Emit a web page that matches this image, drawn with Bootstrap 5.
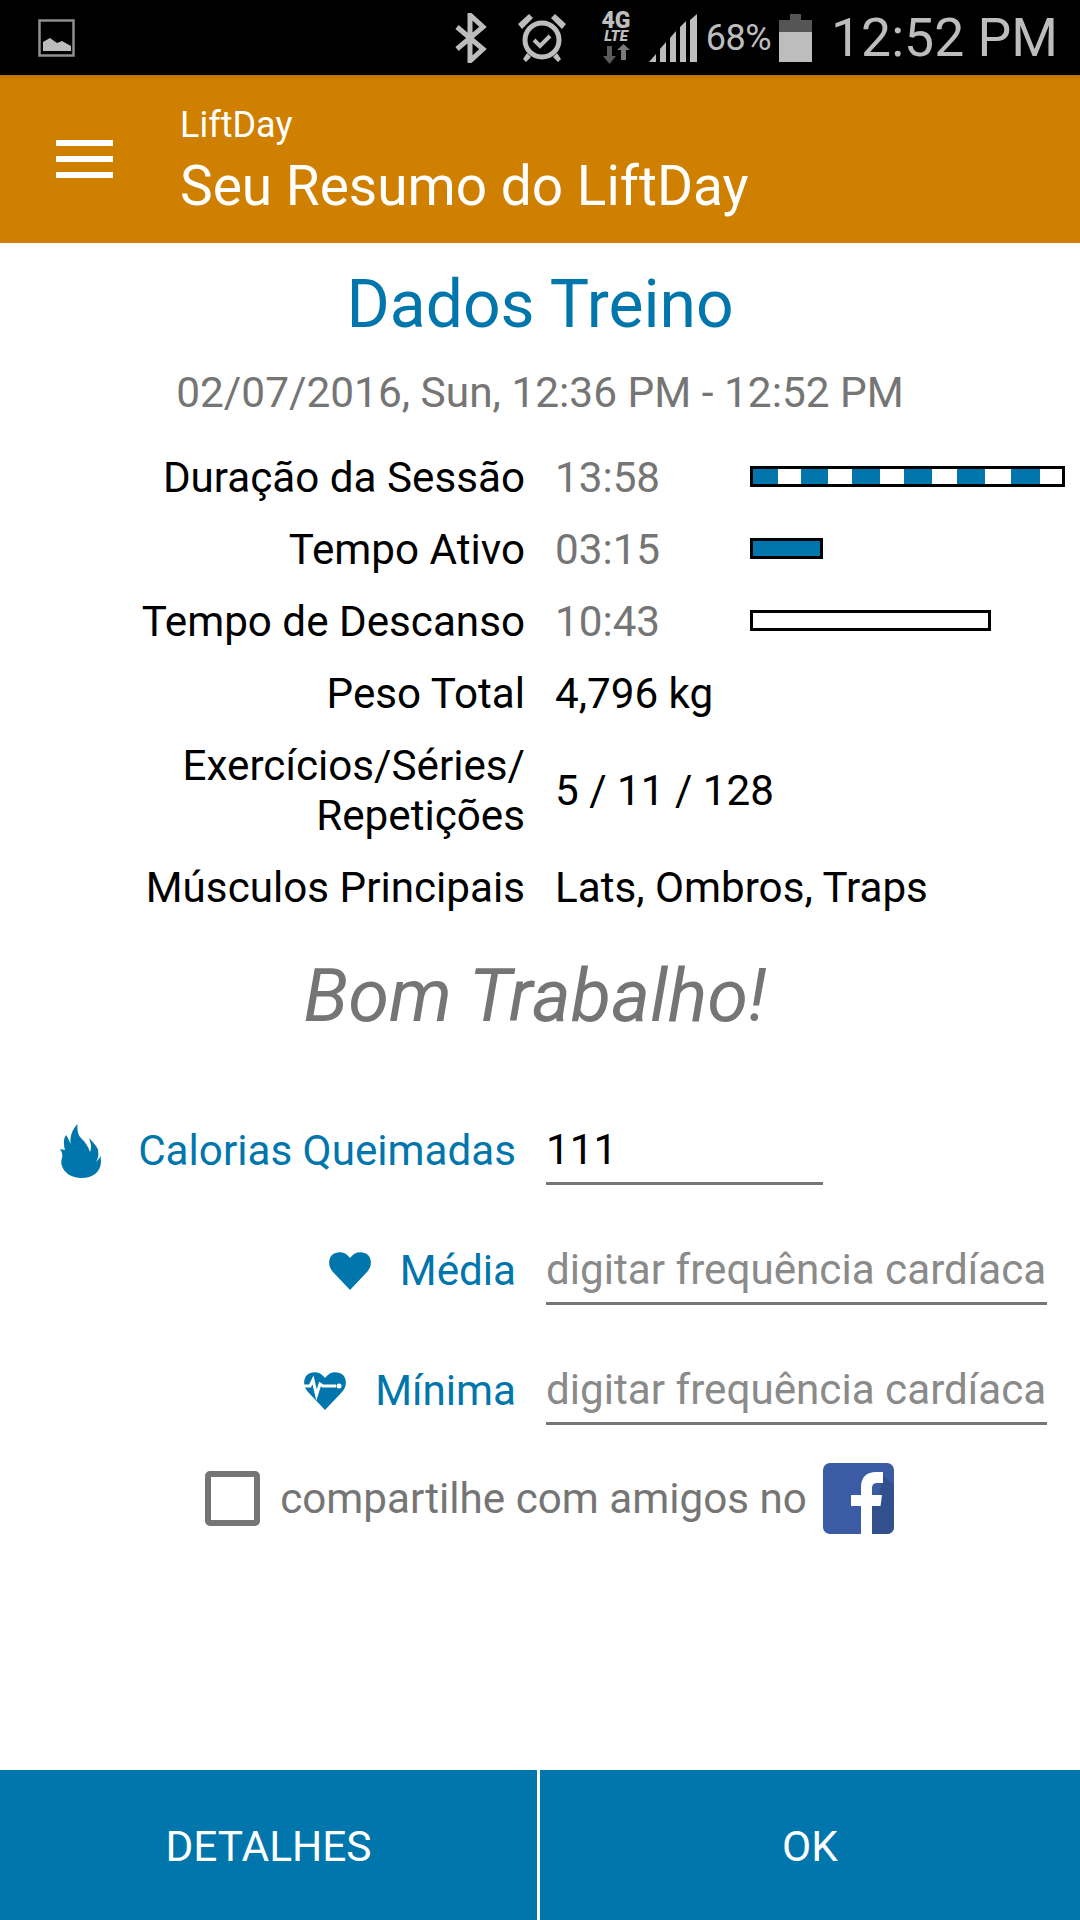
<!DOCTYPE html>
<html lang="pt">
<head>
    <meta charset="UTF-8">
    <title>LiftDay | Seu Resumo</title>
    <meta name="viewport" content="width=device-width, initial-scale=1" />
    <link href="https://cdn.jsdelivr.net/npm/bootstrap@5.3.0/dist/css/bootstrap.min.css" rel="stylesheet">
    <style>
        body {
            background-color: #fff;
            font-family: Roboto, "Liberation Sans", sans-serif;
            margin: 0;
        }
        .screen {
            width: 1080px;
            height: 1920px;
            overflow: hidden;
        }
        .status-bar {
            height: 75px;
            background-color: #000;
            color: #bdbdbd;
            padding: 0 22px 0 38px;
        }
        .status-gap-alarm { margin-left: 31px; }
        .status-gap-net { margin-left: 33px; }
        .status-gap-signal { margin-left: 16px; }
        .status-pct { font-size: 36px; line-height: 1; margin: 0 8px 0 9px; letter-spacing: -0.5px; }
        .status-time { font-size: 53.5px; line-height: 1; margin-left: 19px; }
        .app-bar {
            height: 168px;
            background: linear-gradient(#b87400 0, #d08000 5px);
            color: #fff;
            padding-left: 56px;
        }
        .menu-lines { width: 57px; margin-right: 67px; }
        .menu-lines span { display: block; height: 6px; background-color: #fff; margin-bottom: 10px; }
        .menu-lines span:last-child { margin-bottom: 0; }
        .app-name { font-size: 36px; line-height: 54px; }
        .app-title { font-size: 55px; line-height: 68px; }
        .session-title { font-size: 66px; line-height: 76px; color: #0076ad; margin: 24px 0 0; font-weight: 400; }
        .session-date { font-size: 42.4px; line-height: 48px; color: #757575; margin-top: 26px; }
        .stats {
            display: grid;
            grid-template-columns: 525px 1fr;
            column-gap: 30px;
            row-gap: 22px;
            margin-top: 36px;
            font-size: 42.2px;
            line-height: 50px;
            color: #000;
        }
        .stat-muted { color: #757575; width: 195px; }
        .time-bar { height: 21px; border: 3px solid #000; background-color: #fff; margin-bottom: 4px; }
        .bar-session {
            width: 315px;
            background: linear-gradient(90deg,
                #0076ad 25px, #fff 25px, #fff 48px,
                #0076ad 48px, #0076ad 75px, #fff 75px, #fff 99px,
                #0076ad 99px, #0076ad 127px, #fff 127px, #fff 151px,
                #0076ad 151px, #0076ad 179px, #fff 179px, #fff 204px,
                #0076ad 204px, #0076ad 232px, #fff 232px, #fff 258px,
                #0076ad 258px, #0076ad 287px, #fff 287px);
        }
        .bar-active { width: 73px; background-color: #0076ad; }
        .bar-rest { width: 241px; }
        .praise { font-size: 74px; line-height: 86px; font-style: italic; color: #757575; margin-top: 40px; padding-right: 10px; }
        .entry-form { margin-top: 78px; padding-right: 33px; }
        .entry-row { height: 68px; margin-bottom: 52px; }
        .entry-row .entry-label { font-size: 42.2px; line-height: 48px; color: #0076ad; }
        .entry-side { width: 516px; margin-right: 30px; }
        .entry-input {
            border: 0;
            border-bottom: 3px solid #757575;
            border-radius: 0;
            padding: 0;
            height: 68px;
            font-size: 42.2px;
            color: #000;
            box-shadow: none;
        }
        .entry-input::placeholder { color: #8a8a8a; opacity: 1; }
        .entry-short { width: 277px; }
        .entry-long { width: 501px; }
        .flame-icon { width: 42px; height: 54px; margin-left: 60px; }
        .heart-icon { width: 42px; height: 38px; margin-right: 29px; }
        .share-row { margin-top: -14px; padding-left: 52px; font-size: 42.2px; color: #757575; }
        .share-box { width: 55px; height: 55px; border: 6px solid #757575; border-radius: 5px; margin-right: 20px; }
        .fb-icon { width: 71px; height: 71px; margin-left: 16px; }
        .bottom-bar { height: 150px; background-color: #0076ad; }
        .bottom-btn {
            border: 0;
            border-radius: 0;
            background-color: #0076ad;
            color: #fff;
            font-size: 42.4px;
            padding-top: 10px;
        }
        .bottom-btn:first-child { border-right: 3px solid #fff; }
    </style>
</head>
<body>

<div class="screen d-flex flex-column">

    <!-- Status bar -->
    <div class="status-bar d-flex align-items-center flex-shrink-0">
        <svg width="37" height="38" viewBox="0 0 37 38"><path fill="none" stroke="#8f8f8f" stroke-width="2.5" d="M1.5 1.5h34v35h-34z"/><path fill="#bdbdbd" d="M5 32V23l7-4 7 5 5-2 9 5v5z"/></svg>
        <div class="ms-auto d-flex align-items-center">
            <svg width="33" height="50" viewBox="0 0 33 50"><path fill="none" stroke="#bdbdbd" stroke-width="5" d="M3 14l26 22-13 12V2l13 12L3 36"/></svg>
            <svg width="48" height="50" viewBox="0 0 48 50" class="status-gap-alarm"><circle cx="24" cy="27" r="17" fill="none" stroke="#bdbdbd" stroke-width="5"/><path fill="none" stroke="#bdbdbd" stroke-width="4" d="M16 27l6 6 10-10"/><path fill="#bdbdbd" d="M0 11L11 1l4 4L4 16zM48 11L37 1l-4 4 11 11zM9 40l4 4-5 5-3-3zM39 40l-4 4 5 5 3-3z"/></svg>
            <svg width="34" height="75" viewBox="0 0 34 75" class="status-gap-net"><text text-anchor="middle" font-family="Roboto" font-weight="900" fill="#bdbdbd"><tspan x="17" y="28" font-size="23">4G</tspan><tspan x="17" y="41" font-size="15" font-style="italic">LTE</tspan></text><path fill="#5a5a5a" d="M8 46h5v10h4l-6.500 8L4 56h4z"/><path fill="#7a7a7a" d="M22 60h5V50h4l-6.500-6L18 50h4z"/></svg>
            <svg width="48" height="48" viewBox="0 0 48 48" class="status-gap-signal"><path fill="#bdbdbd" d="M0 48l7-8v8zM11 48V35l6-7v20zM21 48V24l6-7v31zM31 48V13l6-6v41zM41 48V6l7-6v48z"/></svg>
            <span class="status-pct">68%</span>
            <svg width="33" height="48" viewBox="0 0 33 48"><path fill="#555" d="M11 0h11v6h11v12H0V6h11z"/><path fill="#bdbdbd" d="M0 18h33v30H0z"/></svg>
            <span class="status-time">12:52 PM</span>
        </div>
    </div>

    <!-- App bar -->
    <div class="app-bar d-flex align-items-center flex-shrink-0">
        <div class="menu-lines"><span></span><span></span><span></span></div>
        <div>
            <div class="app-name">LiftDay</div>
            <div class="app-title">Seu Resumo do LiftDay</div>
        </div>
    </div>

    <!-- Session data -->
    <div class="flex-grow-1">
        <h1 class="session-title text-center">Dados Treino</h1>
        <div class="session-date text-center">02/07/2016, Sun, 12:36 PM - 12:52 PM</div>

        <div class="stats">
            <div class="text-end">Duração da Sessão</div>
            <div class="d-flex align-items-center"><span class="stat-muted">13:58</span><div class="time-bar bar-session"></div></div>
            <div class="text-end">Tempo Ativo</div>
            <div class="d-flex align-items-center"><span class="stat-muted">03:15</span><div class="time-bar bar-active"></div></div>
            <div class="text-end">Tempo de Descanso</div>
            <div class="d-flex align-items-center"><span class="stat-muted">10:43</span><div class="time-bar bar-rest"></div></div>
            <div class="text-end">Peso Total</div>
            <div>4,796 kg</div>
            <div class="text-end">Exercícios/Séries/<br>Repetições</div>
            <div class="d-flex align-items-center">5 / 11 / 128</div>
            <div class="text-end">Músculos Principais</div>
            <div>Lats, Ombros, Traps</div>
        </div>

        <div class="praise text-center">Bom Trabalho!</div>

        <form class="entry-form">
            <div class="entry-row d-flex align-items-center">
                <div class="entry-side d-flex align-items-center">
                    <svg class="flame-icon" viewBox="0 0 42 54"><path fill="#0076ad" d="M17.500 0C12 6 10 12 10.500 20 9 16 8 14 6 11 4 14 3 18 5 26L0 25c2 3 3 6 2 9-1 3-1 6 0 8 2 7 10 12 19 12 12 0 20-6 20-17C41 27 35 20 29 14c2 6 3 9 1 14C28 22 25 18 21 14 18 11 17 6 17.500 0z"/><path fill="#fff" d="M42 28c-1 4-3 7-6 10 2-4 3-7 2-12z"/></svg>
                    <span class="entry-label ms-auto text-nowrap">Calorias Queimadas</span>
                </div>
                <input type="text" class="form-control entry-input entry-short" value="111">
            </div>
            <div class="entry-row d-flex align-items-center">
                <div class="entry-side d-flex align-items-center justify-content-end">
                    <svg class="heart-icon" viewBox="0 0 42 38"><path fill="#0076ad" d="M21 38L4 20C-1 15-1 7 3 3c5-4 13-4 18 3 5-7 13-7 18-3 4 4 4 12-1 17z"/></svg>
                    <span class="entry-label">Média</span>
                </div>
                <input type="text" class="form-control entry-input entry-long" placeholder="digitar frequência cardíaca">
            </div>
            <div class="entry-row d-flex align-items-center">
                <div class="entry-side d-flex align-items-center justify-content-end">
                    <svg class="heart-icon" viewBox="0 0 42 38"><path fill="#0076ad" d="M21 38L4 20C-1 15-1 7 3 3c5-4 13-4 18 3 5-7 13-7 18-3 4 4 4 12-1 17z"/><path fill="none" stroke="#fff" stroke-width="3" d="M0 14h6l3-6 3.500 15 3.500-11 3 2h13"/><circle cx="35" cy="14" r="2.500" fill="#fff"/></svg>
                    <span class="entry-label">Mínima</span>
                </div>
                <input type="text" class="form-control entry-input entry-long" placeholder="digitar frequência cardíaca">
            </div>
            <div class="share-row d-flex align-items-center justify-content-center">
                <div class="share-box"></div>
                <span>compartilhe com amigos no</span>
                <svg class="fb-icon" viewBox="0 0 71 71"><rect width="71" height="71" rx="7" fill="#3b5ba5"/><path fill="#324f8e" d="M49 71h15a7 7 0 0 0 7-7V22L60 12 56 32l-7 11z"/><path fill="#fff" d="M38 71V43H28V32h10v-8c0-10 6-15 15-15h7v11h-5c-5 0-6 2-6 6v6h10l-1.500 11H49v28z"/></svg>
            </div>
        </form>
    </div>

    <!-- Bottom buttons -->
    <div class="bottom-bar row g-0 flex-shrink-0">
        <button class="btn bottom-btn col-6" type="button">DETALHES</button>
        <button class="btn bottom-btn col-6" type="button">OK</button>
    </div>

</div>

<script src="https://cdn.jsdelivr.net/npm/bootstrap@5.3.0/dist/js/bootstrap.bundle.min.js"></script>
</body>
</html>
